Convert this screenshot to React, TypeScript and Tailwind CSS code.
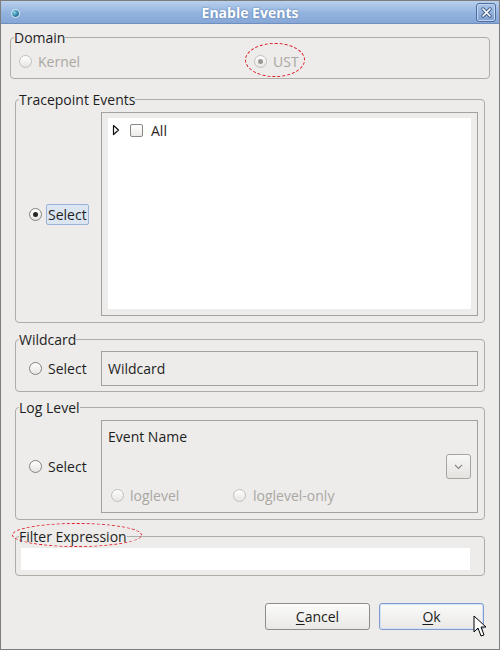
import type { ReactNode } from "react";

function Radio({ checked = false, disabled = false }: { checked?: boolean; disabled?: boolean }) {
  return (
    <span
      className={`flex h-[13px] w-[13px] shrink-0 items-center justify-center rounded-full border bg-[linear-gradient(#ffffff,#e6e5e2)] ${
        disabled ? "border-[#c2c0bb]" : "border-[#858380]"
      }`}
    >
      {checked && (
        <span className={`h-[5px] w-[5px] rounded-full ${disabled ? "bg-[#9a9892]" : "bg-[#262626]"}`} />
      )}
    </span>
  );
}

function Group({
  label,
  className = "",
  children,
  circled = false,
}: {
  label: string;
  className?: string;
  children: ReactNode;
  circled?: boolean;
}) {
  return (
    <fieldset className={`rounded-[4px] border border-[#aeaca7] ${className}`}>
      <legend className="relative ml-[3px] px-0 leading-[17px]">
        {label}
        {circled && (
          <span className="absolute left-[-7px] right-[-15px] top-[-5px] bottom-[-2px] rounded-[50%] border border-dashed border-[#e0141e]" />
        )}
      </legend>
      {children}
    </fieldset>
  );
}

function Button({ children, focused = false }: { children: ReactNode; focused?: boolean }) {
  return (
    <button
      type="button"
      className={`flex h-[27px] w-[105px] items-center justify-center rounded-[3px] border bg-[linear-gradient(#fbfbfa,#e9e8e6)] text-[#1c1c1c] ${
        focused ? "border-[#7b9ccd] shadow-[inset_0_0_0_1px_#d7e3f3]" : "border-[#8f8d89]"
      }`}
    >
      {children}
    </button>
  );
}

export default function App() {
  return (
    <div className="relative flex h-[650px] w-[500px] flex-col border border-[#7d7d7d] bg-[#edeceb] font-['Open_Sans',sans-serif] text-[14px] text-[#1e1e1e]">
      {/* title bar */}
      <div className="relative flex h-[23px] items-center justify-center border-b border-[#6f8fbe] bg-[linear-gradient(#b9d0ec,#93b3df_55%,#86a7d6)]">
        <span className="absolute left-[10px] top-[8px] h-[9px] w-[9px] rounded-full border border-[#d8ecf5] bg-[radial-gradient(circle_at_35%_35%,#8fd6ea,#2b7ea4_55%,#134a66)]" />
        <span className="font-bold text-white [text-shadow:0_0_2px_#4f6f9f]">Enable Events</span>
        <span className="absolute right-[3px] top-[2px] flex h-[19px] w-[20px] items-center justify-center rounded-[3px] border border-[#4f6e9f] bg-[linear-gradient(#a8c3e7,#7e9fd0)] shadow-[inset_0_0_0_1px_#c4d6ef]">
          <svg width="11" height="11" viewBox="0 0 11 11">
            <path d="M2 2L9 9M9 2L2 9" stroke="#3b5683" strokeWidth="3.2" strokeLinecap="round" />
            <path d="M2 2L9 9M9 2L2 9" stroke="#ffffff" strokeWidth="1.7" strokeLinecap="round" />
          </svg>
        </span>
      </div>

      <div className="flex flex-col px-[9px]">
        <Group label="Domain" className="mt-[5px] h-[50px]">
          <div className="flex h-[32px] items-center pb-[2px] pl-[8px] text-[#aaa7a1]">
            <div className="flex w-[235px] items-center gap-[6px]">
              <Radio disabled />
              <span>Kernel</span>
            </div>
            <div className="relative flex items-center gap-[6px]">
              <Radio checked disabled />
              <span>UST</span>
              <span className="absolute left-[-9px] right-[-6px] top-[-8px] bottom-[-5px] rounded-[50%] border border-dashed border-[#e0141e]" />
            </div>
          </div>
        </Group>

        <div className="flex flex-col px-[5px]">
          <Group label="Tracepoint Events" className="mt-[12px]">
            <div className="flex pb-[6px] pr-[6px] pt-[4px]">
              <div className="flex w-[85px] shrink-0 items-center pl-[13px]">
                <Radio checked />
                <span className="ml-[4px] flex h-[21px] items-center rounded-[2px] border border-[#9ab3d7] bg-[#dce5f2] px-[1px]">
                  Select
                </span>
              </div>
              <div className="h-[204px] flex-1 border border-[#a3a19d] p-[6px] pt-[5px]">
                <div className="h-full bg-white">
                  <div className="flex h-[18px] items-center pl-[4px] pt-[6px]">
                    <svg width="8" height="12" viewBox="0 0 8 12" className="shrink-0">
                      <path d="M1.5 1.5L6.5 6L1.5 10.5Z" fill="none" stroke="#111" strokeWidth="1.2" strokeLinejoin="round" />
                    </svg>
                    <span className="ml-[10px] h-[13px] w-[13px] rounded-[2px] border border-[#8a8884] bg-[linear-gradient(#ffffff,#ecebe8)]" />
                    <span className="ml-[8px] text-[#2a2520]">All</span>
                  </div>
                </div>
              </div>
            </div>
          </Group>

          <Group label="Wildcard" className="mt-[8px]">
            <div className="flex pb-[5px] pr-[6px] pt-[3px]">
              <div className="flex w-[85px] shrink-0 items-center gap-[6px] pl-[13px]">
                <Radio />
                <span>Select</span>
              </div>
              <div className="flex h-[35px] flex-1 items-center border border-[#a3a19d] pl-[6px]">Wildcard</div>
            </div>
          </Group>

          <Group label="Log Level" className="mt-[7px]">
            <div className="flex pb-[6px] pr-[6px] pt-[4px]">
              <div className="flex w-[85px] shrink-0 items-center gap-[6px] pl-[13px]">
                <Radio />
                <span>Select</span>
              </div>
              <div className="flex h-[93px] flex-1 flex-col border border-[#a3a19d] px-[6px] pt-[7px]">
                <span className="leading-[17px]">Event Name</span>
                <div className="mt-[9px] flex justify-end">
                  <span className="flex h-[25px] w-[25px] items-center justify-center rounded-[3px] border border-[#a7a5a1] bg-[linear-gradient(#f7f7f6,#e4e3e0)]">
                    <svg width="9" height="6" viewBox="0 0 9 6">
                      <path d="M1 1L4.5 4.5L8 1" fill="none" stroke="#8a8884" strokeWidth="1.1" />
                    </svg>
                  </span>
                </div>
                <div className="mt-[8px] flex items-center pl-[3px] leading-[17px] text-[#aaa7a1]">
                  <div className="flex w-[122px] items-center gap-[6px]">
                    <Radio disabled />
                    <span>loglevel</span>
                  </div>
                  <div className="flex items-center gap-[7px]">
                    <Radio disabled />
                    <span>loglevel-only</span>
                  </div>
                </div>
              </div>
            </div>
          </Group>

          <Group label="Filter Expression" className="mt-[8px]" circled>
            <div className="pb-[5px] pl-[5px] pt-[3px]">
              <div className="h-[22px] w-[449px] bg-white" />
            </div>
          </Group>
        </div>
      </div>

      <div className="mt-[27px] flex justify-end gap-[9px] pr-[15px]">
        <Button>
          <u className="underline-offset-2">C</u>ancel
        </Button>
        <Button focused>
          <u className="underline-offset-2">O</u>k
        </Button>
      </div>

      {/* mouse pointer */}
      <svg className="absolute left-[472px] top-[614px]" width="14" height="23" viewBox="0 0 14 23">
        <path d="M1 1L1 17L5 13L8 21L11 20L8 12L13 12Z" fill="#fff" stroke="#000" strokeWidth="1" strokeLinejoin="round" />
      </svg>
    </div>
  );
}
